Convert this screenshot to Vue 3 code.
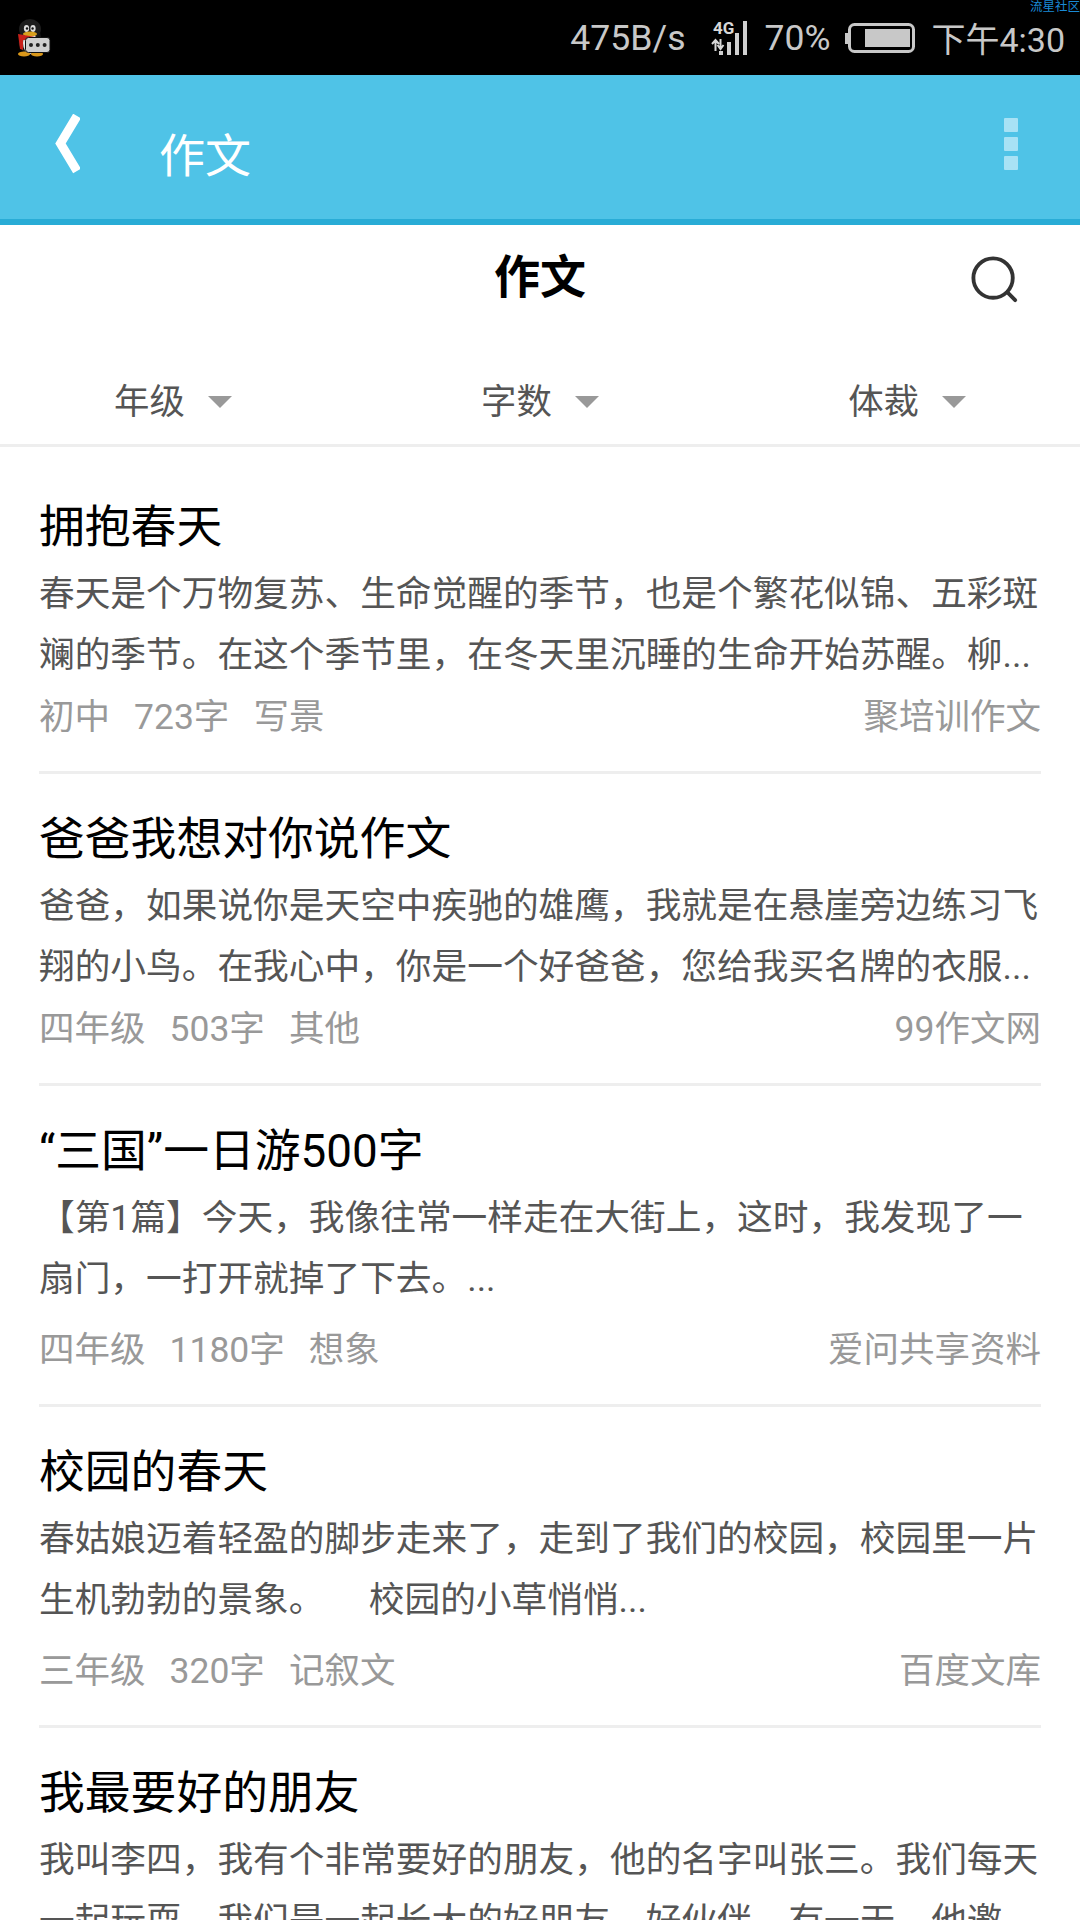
<template>
  <div class="phone">
    <div class="status-bar">
      <svg class="qq" viewBox="0 0 36 38" width="36" height="38">
        <ellipse cx="7" cy="21" rx="3" ry="7" fill="#1c1c1c" transform="rotate(12 7 21)" />
        <ellipse cx="15" cy="20" rx="11" ry="16" fill="#161616" />
        <ellipse cx="15" cy="10" rx="11" ry="10" fill="#1d1d1d" />
        <ellipse cx="15" cy="24" rx="7" ry="11" fill="#e8e8e8" />
        <ellipse cx="11.5" cy="9.5" rx="2.6" ry="3.4" fill="#ddd" />
        <ellipse cx="18" cy="9.5" rx="2.6" ry="3.4" fill="#ddd" />
        <circle cx="12" cy="9.5" r="1.2" fill="#111" />
        <circle cx="17.6" cy="9.5" r="1.2" fill="#111" />
        <ellipse cx="15" cy="15" rx="7" ry="2.4" fill="#d9a01e" />
        <path d="M3 15 L26 19 L27 23 L8 21 L8 31 L5 30 Z" fill="#c8201a" />
        <ellipse cx="9" cy="35" rx="6" ry="2.6" fill="#d9971a" />
        <ellipse cx="22" cy="35" rx="6" ry="2.6" fill="#d9971a" />
        <rect x="10.5" y="18.5" width="24.5" height="15" rx="3" fill="#cfcfcf" stroke="#111" stroke-width="1" />
        <circle cx="16" cy="26" r="2" fill="#222" />
        <circle cx="22.8" cy="26" r="2" fill="#222" />
        <circle cx="29.6" cy="26" r="2" fill="#222" />
      </svg>
      <div class="status-right">
        <span class="speed">475B/s</span>
        <svg class="signal" viewBox="0 0 36 34" width="36" height="34">
          <text x="2" y="13" class="net">4G</text>
          <path d="M4.500 30V19M1 23l3.500-4 3.500 4M9.500 18v10M6.500 24l3 4 3-4" stroke="#d8d8d8" stroke-width="2" fill="none" />
          <rect x="8" y="30" width="4" height="4" fill="#d0d0d0" />
          <rect x="16" y="21" width="4" height="13" fill="#d0d0d0" />
          <rect x="24" y="12" width="4" height="22" fill="#d0d0d0" />
          <rect x="32" y="0" width="4" height="34" fill="#d0d0d0" />
        </svg>
        <span class="pct">70%</span>
        <svg class="battery" viewBox="0 0 70 30" width="70" height="30">
          <rect x="0" y="10" width="4" height="11" fill="#c8c8c8" />
          <rect x="4.500" y="1.500" width="64" height="27" rx="5" fill="none" stroke="#c8c8c8" stroke-width="3" />
          <rect x="20" y="6" width="45" height="18" fill="#c8c8c8" />
        </svg>
        <span class="clock">下午4:30</span>
      </div>
      <span class="watermark">流星社区</span>
    </div>

    <header class="app-bar">
      <svg class="back" viewBox="0 0 28 60" width="28" height="60">
        <path d="M25 2 L8.500 29.500 L25 57" fill="none" stroke="#fff" stroke-width="9" />
      </svg>
      <span class="app-title">作文</span>
      <div class="more">
        <i></i><i></i><i></i>
      </div>
    </header>

    <div class="head">
      <h1>作文</h1>
      <svg class="search" viewBox="0 0 50 50" width="48" height="48">
        <circle cx="23" cy="23" r="20.500" fill="none" stroke="#333" stroke-width="4" />
        <path d="M38 38 L46 46" stroke="#333" stroke-width="4" stroke-linecap="round" />
      </svg>
    </div>

    <div class="filters">
      <div v-for="f in filters" :key="f" class="filter">
        <span>{{ f }}</span>
        <b class="arrow"></b>
      </div>
    </div>

    <div class="list">
      <div v-for="item in items" :key="item.title" class="item" :class="{ short: item.short }">
        <div class="title">{{ item.title }}</div>
        <p class="desc">{{ item.desc }}</p>
        <div class="meta">
          <span>{{ item.grade }}</span>
          <span>{{ item.words }}</span>
          <span>{{ item.type }}</span>
          <span class="source">{{ item.source }}</span>
        </div>
      </div>
    </div>
  </div>
</template>

<script setup>
const filters = ["年级", "字数", "体裁"];

const items = [
  {
    title: "拥抱春天",
    desc: "春天是个万物复苏、生命觉醒的季节，也是个繁花似锦、五彩斑斓的季节。在这个季节里，在冬天里沉睡的生命开始苏醒。柳...",
    grade: "初中",
    words: "723字",
    type: "写景",
    source: "聚培训作文",
    short: true
  },
  {
    title: "爸爸我想对你说作文",
    desc: "爸爸，如果说你是天空中疾驰的雄鹰，我就是在悬崖旁边练习飞翔的小鸟。在我心中，你是一个好爸爸，您给我买名牌的衣服...",
    grade: "四年级",
    words: "503字",
    type: "其他",
    source: "99作文网",
    short: true
  },
  {
    title: "“三国”一日游500字",
    desc: "【第1篇】今天，我像往常一样走在大街上，这时，我发现了一扇门，一打开就掉了下去。...",
    grade: "四年级",
    words: "1180字",
    type: "想象",
    source: "爱问共享资料"
  },
  {
    title: "校园的春天",
    desc: "春姑娘迈着轻盈的脚步走来了，走到了我们的校园，校园里一片生机勃勃的景象。\u00A0\u00A0\u00A0\u00A0\u00A0校园的小草悄悄...",
    grade: "三年级",
    words: "320字",
    type: "记叙文",
    source: "百度文库"
  },
  {
    title: "我最要好的朋友",
    desc: "我叫李四，我有个非常要好的朋友，他的名字叫张三。我们每天一起玩耍，我们是一起长大的好朋友，好伙伴。有一天，他邀...",
    grade: "四年级",
    words: "480字",
    type: "写人",
    source: "作文网"
  }
];
</script>

<style scoped>
.phone {
  width: 1080px;
  height: 1920px;
  overflow: hidden;
  background: #fff;
  font-family: Roboto, "Noto Sans CJK SC", sans-serif;
}

.status-bar {
  position: relative;
  height: 75px;
  background: #000;
  display: flex;
  align-items: center;
  justify-content: space-between;
  padding: 0 15px;
  box-sizing: border-box;
}

.status-right {
  display: flex;
  align-items: center;
  color: #c8c8c8;
  font-size: 35.500px;
}

.speed {
  margin-right: 25px;
  font-size: 35.600px;
}

.signal {
  margin-right: 18px;
}

.net {
  font: bold 17px Roboto, sans-serif;
  fill: #d8d8d8;
}

.pct {
  margin-right: 15px;
}

.battery {
  margin-right: 16px;
}

.clock {
  font-size: 34px;
}

.watermark {
  position: absolute;
  top: 0;
  right: 0;
  font-size: 12.500px;
  line-height: 13px;
  color: #1a8ad6;
}

.app-bar {
  height: 150px;
  background: #4fc3e7;
  border-bottom: 6px solid #29acd6;
  box-sizing: border-box;
  display: flex;
  align-items: center;
  padding: 0 62px 0 52px;
}

.back {
  margin-top: -6px;
}

.app-title {
  margin-left: 79px;
  margin-top: 10px;
  color: #fff;
  font-size: 46px;
  flex: 1;
}

.more {
  display: flex;
  flex-direction: column;
  gap: 5px;
  margin-top: -6px;
}

.more i {
  display: block;
  width: 14px;
  height: 14px;
  border-radius: 1px;
  background: #a8e2f5;
}

.head {
  position: relative;
  height: 105px;
  padding-bottom: 10px;
  box-sizing: border-box;
  display: flex;
  align-items: center;
  justify-content: center;
}

.head h1 {
  margin: 0;
  font-size: 46px;
  font-weight: 700;
  color: #000;
}

.search {
  position: absolute;
  right: 61px;
  top: 31px;
}

.filters {
  display: flex;
  justify-content: space-between;
  height: 117px;
  padding: 22px 114px 0;
  border-bottom: 3px solid #eee;
  box-sizing: border-box;
}

.filter {
  display: flex;
  align-items: center;
  gap: 23px;
  color: #555;
  font-size: 35.400px;
}

.arrow {
  width: 0;
  height: 0;
  margin-top: 8px;
  border-left: 12px solid transparent;
  border-right: 12px solid transparent;
  border-top: 12px solid #999;
}

.list {
  padding: 15px 39px 0;
}

.item {
  height: 321px;
  box-sizing: border-box;
  border-bottom: 3px solid #eee;
  padding-top: 41px;
}

.item.short {
  height: 312px;
}

.title {
  font-size: 45.800px;
  line-height: 50px;
  color: #000;
}

.desc {
  margin: 11px 0 0;
  font-size: 35.700px;
  line-height: 61px;
  color: #555;
}

.meta {
  display: flex;
  gap: 24px;
  margin-top: 15px;
  font-size: 35.500px;
  line-height: 50px;
  color: #999;
}

.short .meta {
  margin-top: 6px;
}

.source {
  margin-left: auto;
}
</style>
